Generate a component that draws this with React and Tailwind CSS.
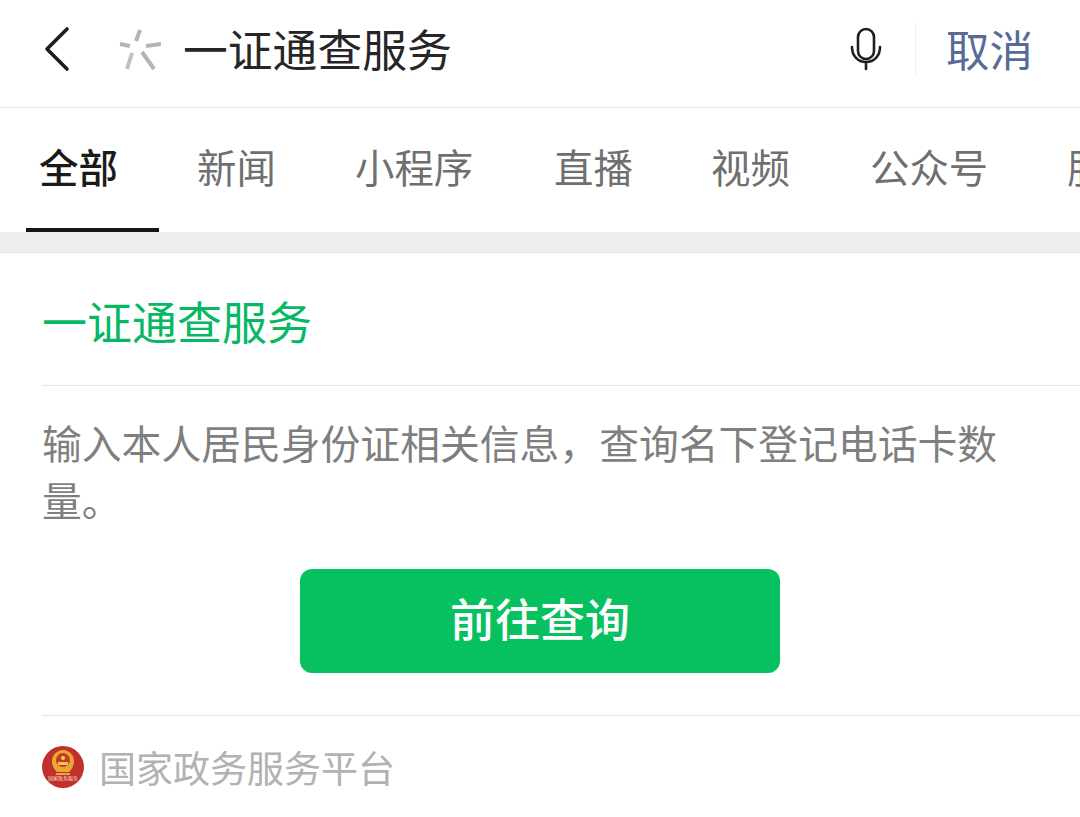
const tabs = [
  { label: "新闻", w: "w-[158px]" },
  { label: "小程序", w: "w-[199px]" },
  { label: "直播", w: "w-[157px]" },
  { label: "视频", w: "w-[159px]" },
  { label: "公众号", w: "w-[197px]" },
  { label: "服务", w: "w-[80px]" },
];

function Emblem() {
  return (
    <div className="relative w-[42px] h-[42px] shrink-0 rounded-full bg-[#c2302e] overflow-hidden">
      <svg viewBox="0 0 42 42" className="w-full h-full">
        <path d="M21 4c6 0 11 5 11 11 0 5-2 8-5 11H15c-3-3-5-6-5-11 0-6 5-11 11-11z" fill="#e9a92f" />
        <circle cx="21" cy="14" r="7" fill="#c93a2c" />
        <path d="M16 16h10v3H16z" fill="#f0c552" />
        <circle cx="21" cy="12" r="2" fill="#f3cf5d" />
        <path d="M14 27h14v2H14z" fill="#e9a92f" />
      </svg>
      <span className="absolute left-0 right-0 bottom-[8px] text-center text-[5px] leading-[5px] text-[#f6dfc4] whitespace-nowrap">
        国家政务服务
      </span>
    </div>
  );
}

export default function App() {
  return (
    <div className="w-[1080px] h-[817px] overflow-hidden bg-white font-['Noto_Sans_CJK_SC','Noto_Sans',sans-serif]">
      {/* search bar */}
      <div className="h-[108px] flex items-center border-b border-[#e8e8e8] pl-[44px] pr-[47px] pb-[10px]">
        <svg width="26" height="46" viewBox="0 0 26 46" fill="none" className="shrink-0">
          <path d="M23 3 3 23l20 20" stroke="#1c1c1c" strokeWidth="3.6" strokeLinecap="round" strokeLinejoin="round" />
        </svg>
        <svg width="44" height="44" viewBox="0 0 44 44" fill="none" className="ml-[49px] shrink-0">
          <g stroke="#b4b4b4" strokeWidth="4">
            <path d="M21 3 17 14" />
            <path d="M1 17 11 19" />
            <path d="M42 17 27 19" />
            <path d="M13 26 8 42" stroke="#c0c0c0" />
            <path d="M23 25 35 42" />
          </g>
        </svg>
        <div className="ml-[20px] text-[44.8px] leading-none text-[#262626] whitespace-nowrap">一证通查服务</div>
        <svg width="32" height="44" viewBox="0 0 32 44" fill="none" className="ml-auto shrink-0">
          <rect x="8" y="2" width="16" height="30" rx="8" stroke="#1f1f1f" strokeWidth="2.6" />
          <path d="M2 20c0 9 6 15 14 15s14-6 14-15M16 35v7" stroke="#1f1f1f" strokeWidth="2.6" strokeLinecap="round" />
        </svg>
        <div className="ml-[33px] w-px h-[52px] bg-[#f0f0f0]" />
        <div className="ml-[30px] text-[43.5px] leading-none text-[#576b95] whitespace-nowrap">取消</div>
      </div>

      {/* tabs */}
      <div className="relative h-[124px] flex items-center pl-[39px] pb-[8px] overflow-hidden whitespace-nowrap text-[39.4px] leading-none text-[#6f6f6f]">
        <div className="w-[158px] shrink-0 font-medium text-[#1a1a1a]">全部</div>
        {tabs.map((t) => (
          <div key={t.label} className={`${t.w} shrink-0`}>{t.label}</div>
        ))}
        <div className="absolute left-[26px] bottom-0 w-[133px] h-[4px] bg-[#161616]" />
      </div>

      <div className="h-[21px] bg-[#ededed] border-b border-[#e6e6e6]" />

      {/* result card */}
      <div className="pl-[42px]">
        <div className="h-[133px] flex items-center border-b border-[#e5e5e5] pt-[2px]">
          <div className="text-[45px] leading-none text-[#07b863]">一证通查服务</div>
        </div>
        <div className="pt-[27px] pr-[80px] text-[39.8px] leading-[57px] text-[#7f7f7f]">
          输入本人居民身份证相关信息，查询名下登记电话卡数量。
        </div>
        <div className="mt-[42px] pr-[42px] flex justify-center">
          <div className="w-[480px] h-[104px] flex items-center justify-center rounded-[12px] bg-[#07c160] pb-[7px] text-[45px] leading-none font-medium text-white">
            前往查询
          </div>
        </div>
        <div className="mt-[42px] h-[102px] border-t border-[#e5e5e5] flex items-center pt-[1px]">
          <Emblem />
          <div className="ml-[15px] text-[37px] leading-none text-[#b2b2b2] whitespace-nowrap">国家政务服务平台</div>
        </div>
      </div>
    </div>
  );
}
